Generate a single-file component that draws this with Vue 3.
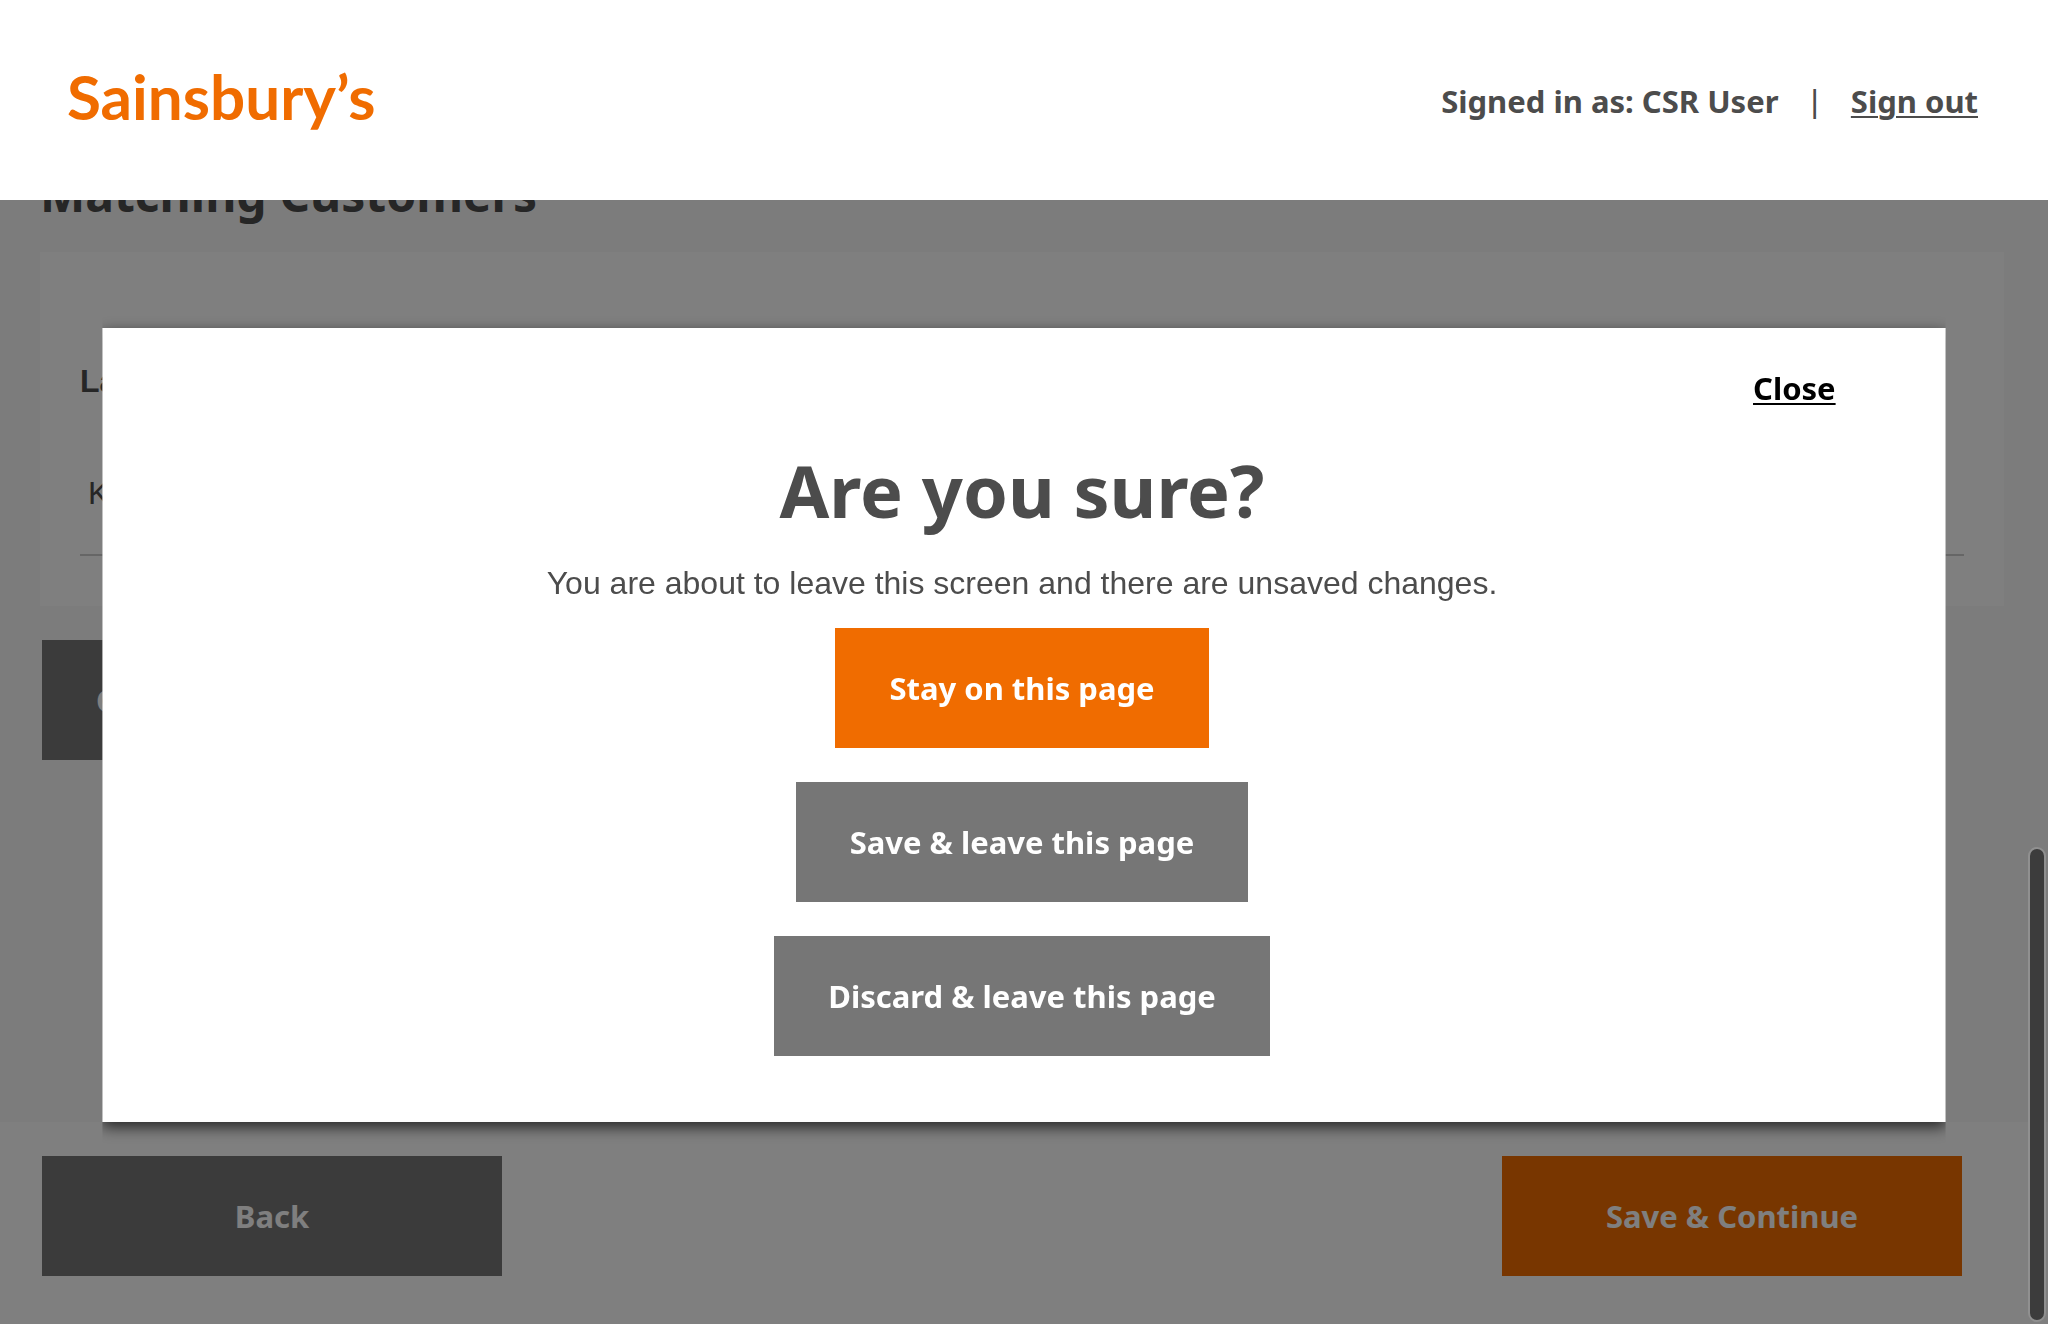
<script setup>
import { ref } from 'vue'

const dialogOpen = ref(true)

function closeDialog() {
  dialogOpen.value = false
}
</script>

<template>
  <div class="page">
    <header class="masthead">
      <a class="logo" href="#">Sainsbury’s</a>
      <nav class="account">
        <span>Signed in as: CSR User</span>
        <span class="divider">|</span>
        <a class="link" href="#">Sign out</a>
      </nav>
    </header>

    <main class="content">
      <h2 class="section-title">Matching Customers</h2>
      <section class="card">
        <table class="results">
          <thead>
            <tr><th scope="col">La</th></tr>
          </thead>
          <tbody>
            <tr><td>K</td></tr>
          </tbody>
        </table>
      </section>
      <button class="btn secondary create" type="button">C</button>
    </main>

    <footer class="actions">
      <button class="btn secondary wide" type="button">Back</button>
      <button class="btn primary wide" type="button">Save &amp; Continue</button>
    </footer>

    <div v-if="dialogOpen" class="overlay">
      <div class="dialog" role="dialog" aria-modal="true" aria-labelledby="dialog-title">
        <div class="dialog-top">
          <button class="close" type="button" @click="closeDialog">Close</button>
        </div>
        <div class="dialog-body">
          <h1 id="dialog-title" class="dialog-title">Are you sure?</h1>
          <p class="dialog-text">You are about to leave this screen and there are unsaved changes.</p>
          <div class="choices">
            <button class="btn primary" type="button" @click="closeDialog">Stay on this page</button>
            <button class="btn secondary" type="button">Save &amp; leave this page</button>
            <button class="btn secondary" type="button">Discard &amp; leave this page</button>
          </div>
        </div>
      </div>
    </div>

    <div class="scroll-thumb" aria-hidden="true"></div>
  </div>
</template>

<style>
body {
  margin: 0;
  background: #f8f8f8;
}
</style>

<style scoped>
.page {
  display: flex;
  flex-direction: column;
  box-sizing: border-box;
  min-height: 100vh;
  color: #4c4c4c;
  font: 32px/48px "Liberation Sans", Arial, sans-serif;
}

.masthead {
  position: fixed;
  inset: 0 0 auto;
  z-index: 3;
  display: flex;
  align-items: flex-start;
  justify-content: space-between;
  padding: 56px 70px 64px 67px;
  background: #fff;
}

.logo {
  color: #f06c00;
  font: 700 62px/80px Lato, sans-serif;
  text-decoration: none;
}

.account {
  display: flex;
  gap: 32px;
  margin-top: 21px;
  font: 700 31px/48px "Noto Sans", sans-serif;
}

.divider {
  font: 32px/48px "Liberation Sans", Arial, sans-serif;
}

.link {
  color: inherit;
  text-decoration-thickness: 2px;
  text-underline-offset: 3px;
}

.content {
  flex: 1;
  padding: 166px 44px 34px 40px;
}

.section-title {
  margin: 0 0 30px;
  font: 700 48px/56px "Noto Sans", sans-serif;
}

.card {
  margin-bottom: 34px;
  padding: 105px 40px 50px;
  background: #fff;
}

.results {
  width: 100%;
  border-collapse: separate;
  border-spacing: 0;
}

.results th {
  padding: 0 0 32px;
  text-align: left;
}

.results td {
  padding: 32px 8px 37px;
  border-bottom: 2px solid #ccc;
}

.btn {
  height: 120px;
  padding: 0 54px;
  border: 0;
  color: #fff;
  font: 700 31px/48px "Noto Sans", sans-serif;
  cursor: pointer;
}

.primary {
  background: #f06c00;
}

.secondary {
  background: #767676;
}

.create {
  margin-left: 2px;
}

.actions {
  display: flex;
  justify-content: space-between;
  padding: 34px 86px 48px 42px;
  background: #fff;
}

.wide {
  width: 460px;
}

.overlay {
  position: fixed;
  inset: 0;
  z-index: 2;
  padding: 328px 5% 0;
  background: rgba(0, 0, 0, 0.5);
}

.dialog {
  padding: 36px 0 66px;
  background: #fff;
  box-shadow: 0 5px 14px rgba(0, 0, 0, 0.7);
  clip-path: inset(-24px 0);
}

.dialog-top {
  display: flex;
  justify-content: flex-end;
  padding-right: 110px;
}

.close {
  padding: 0;
  border: 0;
  background: none;
  color: #000;
  font: 700 31px/48px "Noto Sans", sans-serif;
  text-decoration: underline 2px;
  text-underline-offset: 3px;
  cursor: pointer;
}

.dialog-body {
  padding-right: 4px;
  text-align: center;
}

.dialog-title {
  margin: 38px 0 29px;
  font: 700 72px/80px "Noto Sans", sans-serif;
}

.dialog-text {
  margin: 0 0 21px;
}

.choices {
  display: flex;
  flex-direction: column;
  align-items: center;
  gap: 34px;
}

.scroll-thumb {
  position: fixed;
  top: 64%;
  right: 2px;
  bottom: 2px;
  z-index: 4;
  box-sizing: border-box;
  width: 18px;
  border: 2px solid #909090;
  border-radius: 9px;
  background: #3c3c3c;
}
</style>
